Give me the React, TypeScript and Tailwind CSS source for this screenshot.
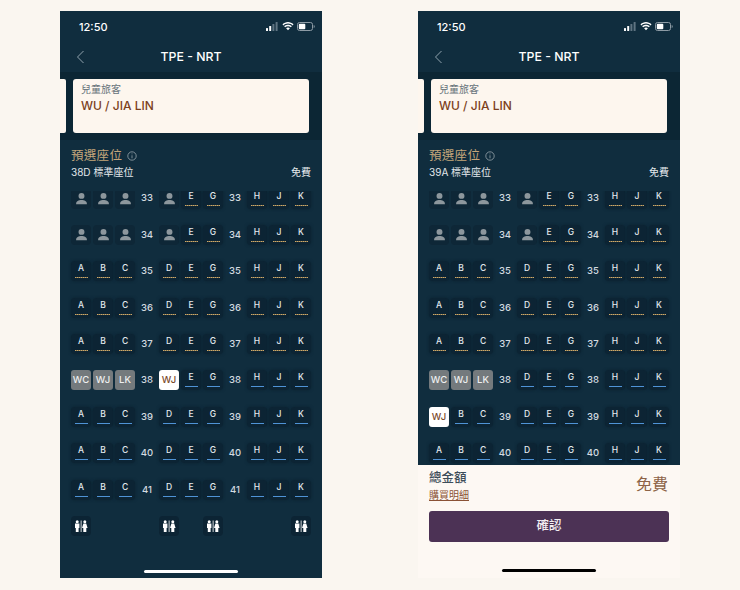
const FONT = "font-['Inter','Noto_Sans_CJK_TC',sans-serif]";

const Person = () => (
  <svg width="13" height="13" viewBox="0 0 14 14" className="block" fill="#8d979d">
    <circle cx="7" cy="4.2" r="3.2" />
    <path d="M1.2 12.6c0-2.6 2.6-4 5.800-4s5.800 1.400 5.800 4v.6H1.200z" />
  </svg>
);

const Lav = () => (
  <svg width="14" height="14" viewBox="0 0 14 14" fill="#ffffff" className="block">
    <circle cx="3.2" cy="2.700" r="1.500" />
    <path d="M1 4.600h4.400v4.300h-.8V13H1.800V8.900H1z" />
    <rect x="6.700" y="1.500" width="0.800" height="11.500" />
    <circle cx="10.800" cy="2.700" r="1.500" />
    <path d="M9.400 4.600h2.800L13.600 9h-1.300v4H9.300V9H8z" />
  </svg>
);

function Seat({ l, gold }: { l: string; gold?: boolean }) {
  return (
    <div className="flex h-5 w-5 flex-col items-center rounded-[4px] bg-[#0c2434] pt-[1px] shadow-[0_0_3px_rgba(8,28,42,0.7)]">
      <span className="text-[8.500px] leading-[12px] font-medium text-[#e4eaee]">{l}</span>
      <span
        className={
          gold
            ? "mt-[3px] h-[1px] w-[13px] bg-[repeating-linear-gradient(90deg,#cfa968_0_1px,#7d6f4e_1px_2px)]"
            : "mt-[3px] h-[1px] w-[13px] bg-[#4f93d6]"
        }
      />
    </div>
  );
}

function Occupied() {
  return (
    <div className="flex h-5 w-5 items-center justify-center rounded-[4px] bg-[#0e2737]">
      <Person />
    </div>
  );
}

function Tag({ l }: { l: string }) {
  return (
    <div className="flex h-5 w-5 items-center justify-center rounded-[3px] bg-[#747a7d] text-[9.500px] font-medium text-[#eef0f0]">
      {l}
    </div>
  );
}

function Selected() {
  return (
    <div className="flex h-5 w-5 items-center justify-center rounded-[3px] bg-white text-[9.500px] font-medium text-[#7a4a2c]">
      WJ
    </div>
  );
}

function Cell({ children }: { children?: React.ReactNode }) {
  return <div className="flex h-full w-[22px] items-center justify-center">{children}</div>;
}

function Num({ n }: { n: number }) {
  return (
    <div className="flex h-full w-[22px] items-center justify-center text-[9.500px] font-medium text-[#d3dbe0]">{n}</div>
  );
}

const LEFT = ["A", "B", "C"];
const MID = ["D", "E", "G"];
const RIGHT = ["H", "J", "K"];

function Row({ n, sel }: { n: number; sel: string }) {
  const gold = n < 38;
  const seat = (l: string) => {
    if (n <= 34 && (l === "A" || l === "B" || l === "C" || l === "D")) return <Occupied />;
    if (n === 38 && l === "A") return <Tag l="WC" />;
    if (n === 38 && l === "B") return <Tag l="WJ" />;
    if (n === 38 && l === "C") return <Tag l="LK" />;
    if (`${n}${l}` === sel) return <Selected />;
    return <Seat l={l} gold={gold} />;
  };
  return (
    <div className="flex h-[36.400px] shrink-0 items-center">
      {LEFT.map((l) => (
        <Cell key={l}>{seat(l)}</Cell>
      ))}
      <Num n={n} />
      {MID.map((l) => (
        <Cell key={l}>{seat(l)}</Cell>
      ))}
      <Num n={n} />
      {RIGHT.map((l) => (
        <Cell key={l}>{seat(l)}</Cell>
      ))}
    </div>
  );
}

function LavRow() {
  const box = (
    <div className="flex h-5 w-5 items-center justify-center rounded-[4px] bg-[#0c2434]">
      <Lav />
    </div>
  );
  return (
    <div className="flex h-[36.400px] shrink-0 items-center">
      <Cell>{box}</Cell>
      <Cell />
      <Cell />
      <Cell />
      <Cell>{box}</Cell>
      <Cell />
      <Cell>{box}</Cell>
      <Cell />
      <Cell />
      <Cell />
      <Cell>{box}</Cell>
    </div>
  );
}

function StatusIcons() {
  return (
    <div className="flex items-center gap-[3px]">
      <svg width="13" height="9" viewBox="0 0 13 9" className="block">
        <rect x="0" y="6" width="2" height="3" rx="0.5" fill="#fff" />
        <rect x="3.2" y="4" width="2" height="5" rx="0.5" fill="#fff" />
        <rect x="6.4" y="2" width="2" height="7" rx="0.5" fill="#5f7482" />
        <rect x="9.6" y="0" width="2" height="9" rx="0.5" fill="#5f7482" />
      </svg>
      <svg width="12" height="9" viewBox="0 0 12 9" className="block" fill="#fff">
        <path d="M6 1.600c1.800 0 3.400.7 4.600 1.800l.9-1C10 1 8.100.1 6 .1S2 1 .5 2.400l.9 1C2.600 2.300 4.200 1.600 6 1.600z" />
        <path d="M6 4.200c1.100 0 2.100.4 2.900 1.100l.9-1C8.800 3.300 7.500 2.800 6 2.800s-2.800.5-3.800 1.500l.9 1C3.900 4.600 4.900 4.200 6 4.200z" />
        <path d="M6 5.500c-.8 0-1.400.3-1.900.7L6 8.300l1.900-2.100c-.5-.4-1.100-.7-1.900-.7z" />
      </svg>
      <svg width="18" height="9" viewBox="0 0 18 9" className="block">
        <rect x="0.5" y="0.5" width="15" height="8" rx="2" fill="none" stroke="#8d9ba5" />
        <rect x="1.800" y="1.800" width="6.500" height="5.400" rx="1" fill="#fff" />
        <path d="M16.700 3v3c.6-.2 1-.8 1-1.500s-.4-1.300-1-1.500z" fill="#8d9ba5" />
      </svg>
    </div>
  );
}

function Phone({ sel, label, tall }: { sel: string; label: string; tall?: boolean }) {
  const rows = tall ? [33, 34, 35, 36, 37, 38, 39, 40] : [33, 34, 35, 36, 37, 38, 39, 40, 41];
  return (
    <div className={`flex h-[567px] w-[262px] flex-col overflow-hidden ${tall ? "bg-[#fdf8f3]" : "bg-[#102d3e]"}`}>
      <div className="flex min-h-0 flex-1 flex-col bg-[#102d3e]">
        <div className="flex h-[31px] shrink-0 items-start justify-between pt-[9px] pr-[7px] pl-[19px]">
          <span className="text-[11px] leading-[14px] font-medium text-white">12:50</span>
          <div className="pt-[2px]">
            <StatusIcons />
          </div>
        </div>
        <div className="relative flex h-[30px] shrink-0 items-center justify-center">
          <svg width="9" height="14" viewBox="0 0 9 14" className="absolute top-[8px] left-[16px]" fill="none" stroke="#9fb0ba" strokeWidth="0.900">
            <path d="M7.500 1 1.500 7l6 6" />
          </svg>
          <span className="text-[12.300px] leading-[16px] font-medium text-white">TPE - NRT</span>
        </div>
        <div className="flex h-[68px] shrink-0 items-center bg-[#0c2634]">
          <div className="h-[54px] w-[6px] shrink-0 rounded-r-[2px] bg-[#fdf6ee]" />
          <div className="ml-[7px] h-[54px] w-[236px] shrink-0 rounded-[3px] bg-[#fdf6ee] pt-[4px] pl-[8px]">
            <div className="text-[10px] leading-[13px] text-[#66727a]">兒童旅客</div>
            <div className="mt-[2px] text-[12px] leading-[16px] font-medium text-[#7b3f20]">WU / JIA LIN</div>
          </div>
        </div>
        <div className="flex shrink-0 items-center gap-[5px] pt-[7px] pl-[11px]">
          <span className="text-[12.500px] leading-[17px] tracking-[0.3px] text-[#c4a67a]">預選座位</span>
          <svg width="10" height="10" viewBox="0 0 10 10" fill="none" stroke="#aab4ba" strokeWidth="0.700" className="block">
            <circle cx="5" cy="5" r="4.200" />
            <path d="M5 4.300v3M5 2.500v.8" />
          </svg>
        </div>
        <div className="mt-[1px] flex shrink-0 items-center justify-between px-[11px] text-[10px] leading-[14px] text-[#e3e8eb]">
          <span>{label} 標準座位</span>
          <span>免費</span>
        </div>
        <div className="mt-[12px] min-h-0 flex-1 overflow-hidden">
          <div className="-mt-[10.700px] flex flex-col pl-[10px]">
            {rows.map((n) => (
              <Row key={n} n={n} sel={sel} />
            ))}
            {tall ? null : <LavRow />}
          </div>
        </div>
      </div>
      {tall ? (
        <div className="h-[113px] shrink-0 px-[11px] pt-[5px]">
          <div className="flex items-start justify-between">
            <div>
              <div className="text-[12.500px] leading-[16px] font-medium text-[#3d4d59]">總金額</div>
              <div className="mt-[3px] text-[10px] leading-[13px] text-[#8a5236] underline">購買明細</div>
            </div>
            <div className="mt-[4px] pr-[1px] text-[16px] leading-[20px] text-[#8d6347]">免費</div>
          </div>
          <div className="mt-[9px] flex h-[31px] items-center justify-center rounded-[3px] bg-[#4c3255] text-[12.500px] font-medium text-[#f3eef2]">
            確認
          </div>
          <div className="mx-auto mt-[27px] h-[3px] w-[94px] rounded-full bg-black" />
        </div>
      ) : (
        <div className="flex h-[9px] shrink-0 justify-center bg-[#102d3e] pt-[1px]">
          <div className="h-[3px] w-[94px] rounded-full bg-white" />
        </div>
      )}
    </div>
  );
}

export default function App() {
  return (
    <div className={`flex h-[590px] w-[740px] gap-[96px] overflow-hidden bg-[#faf6f0] pt-[11px] pl-[60px] ${FONT}`}>
      <Phone sel="38D" label="38D" />
      <Phone sel="39A" label="39A" tall />
    </div>
  );
}
